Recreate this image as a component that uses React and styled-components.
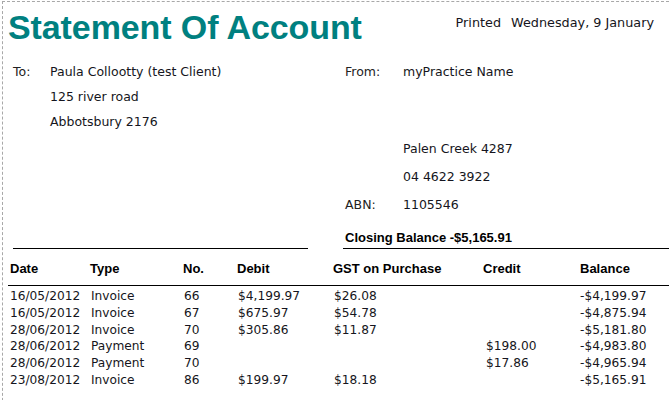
import React from "react";
import styled, { createGlobalStyle } from "styled-components";

const Global = createGlobalStyle`
  html, body { margin: 0; padding: 0; background: #ffffff; }
  body { font-family: "DejaVu Sans", "Liberation Sans", sans-serif; color: #151520; }
`;

const Page = styled.div`
  width: 669px;
  height: 400px;
  overflow: hidden;
  padding: 1px 0 0 2px;
  box-sizing: border-box;
`;

const Sheet = styled.div`
  border-top: 1px dashed #a8a8a8;
  border-left: 1px dashed #a8a8a8;
  height: 420px;
  box-sizing: border-box;
`;

const TitleBar = styled.div`
  display: flex;
  align-items: flex-start;
  padding: 6px 0 0 5px;
`;

const Title = styled.h1`
  margin: 0;
  font-family: "Liberation Sans", Arial, sans-serif;
  font-weight: 700;
  font-size: 34px;
  line-height: 38px;
  color: #008080;
  letter-spacing: -0.1px;
`;

const Printed = styled.div`
  margin-left: auto;
  margin-top: 7px;
  padding-right: 15px;
  display: flex;
  gap: 10px;
  font-size: 12.8px;
  line-height: 16px;
`;

const Parties = styled.div`
  display: grid;
  grid-template-columns: 332px 1fr;
  margin-top: 18px;
  padding-left: 10px;
`;

const Column = styled.div`
  display: flex;
  flex-direction: column;
`;

const Line = styled.div`
  display: grid;
  grid-template-columns: ${(p) => p.$label}px 1fr;
  height: ${(p) => p.$h}px;
  font-size: 12.5px;
  line-height: 16px;
  white-space: nowrap;
`;

const Label = styled.span`
  color: #222;
`;

const Summary = styled.div`
  display: flex;
  align-items: flex-end;
  margin-top: 17px;
  padding-left: 10px;
`;

const Rule = styled.div`
  width: 295px;
  border-bottom: 1px solid #000;
`;

const Closing = styled.div`
  flex: 1;
  margin-left: 35px;
  padding: 0 0 2px 2px;
  border-bottom: 1px solid #000;
  font-family: "Liberation Sans", Arial, sans-serif;
  font-weight: 700;
  font-size: 13px;
  line-height: 16px;
  color: #000;
`;

const Table = styled.div`
  margin: 12px 0 0 5px;
`;

const cols = "80px 93px 54px 96px 150px 97px 1fr";

const HeadRow = styled.div`
  display: grid;
  grid-template-columns: ${cols};
  padding: 0 0 8px 2px;
  border-bottom: 1px solid #000;
  font-family: "Liberation Sans", Arial, sans-serif;
  font-weight: 700;
  font-size: 13px;
  line-height: 16px;
  color: #000;
`;

const Body = styled.div`
  padding-top: 2px;
`;

const Row = styled.div`
  display: grid;
  grid-template-columns: ${cols};
  padding-left: 2px;
  font-size: 12.2px;
  line-height: 16.8px;
  white-space: nowrap;
`;

const Cell = styled.span`
  padding-left: ${(p) => p.$pad || 0}px;
`;

const rows = [
  ["16/05/2012", "Invoice", "66", "$4,199.97", "$26.08", "", "-$4,199.97"],
  ["16/05/2012", "Invoice", "67", "$675.97", "$54.78", "", "-$4,875.94"],
  ["28/06/2012", "Invoice", "70", "$305.86", "$11.87", "", "-$5,181.80"],
  ["28/06/2012", "Payment", "69", "", "", "$198.00", "-$4,983.80"],
  ["28/06/2012", "Payment", "70", "", "", "$17.86", "-$4,965.94"],
  ["23/08/2012", "Invoice", "86", "$199.97", "$18.18", "", "-$5,165.91"],
];

const pads = [0, 1, 1, 1, 1, 3, 0];

export default function App() {
  return (
    <>
      <Global />
      <Page>
        <Sheet>
          <TitleBar>
            <Title>Statement Of Account</Title>
            <Printed>
              <span>Printed</span>
              <span>Wednesday, 9 January</span>
            </Printed>
          </TitleBar>
          <Parties>
            <Column>
              <Line $label={37} $h={25}>
                <Label>To:</Label>
                <span>Paula Collootty (test Client)</span>
              </Line>
              <Line $label={37} $h={25}>
                <Label />
                <span>125 river road</span>
              </Line>
              <Line $label={37} $h={25}>
                <Label />
                <span>Abbotsbury 2176</span>
              </Line>
            </Column>
            <Column>
              <Line $label={58} $h={77}>
                <Label>From:</Label>
                <span>myPractice Name</span>
              </Line>
              <Line $label={58} $h={28}>
                <Label />
                <span>Palen Creek 4287</span>
              </Line>
              <Line $label={58} $h={28}>
                <Label />
                <span>04 4622 3922</span>
              </Line>
              <Line $label={58} $h={16}>
                <Label>ABN:</Label>
                <span>1105546</span>
              </Line>
            </Column>
          </Parties>
          <Summary>
            <Rule />
            <Closing>Closing Balance -$5,165.91</Closing>
          </Summary>
          <Table>
            <HeadRow>
              <span>Date</span>
              <span>Type</span>
              <span>No.</span>
              <span>Debit</span>
              <span>GST on Purchase</span>
              <span>Credit</span>
              <span>Balance</span>
            </HeadRow>
            <Body>
              {rows.map((r, i) => (
                <Row key={i}>
                  {r.map((c, j) => (
                    <Cell key={j} $pad={pads[j]}>
                      {c}
                    </Cell>
                  ))}
                </Row>
              ))}
            </Body>
          </Table>
        </Sheet>
      </Page>
    </>
  );
}
